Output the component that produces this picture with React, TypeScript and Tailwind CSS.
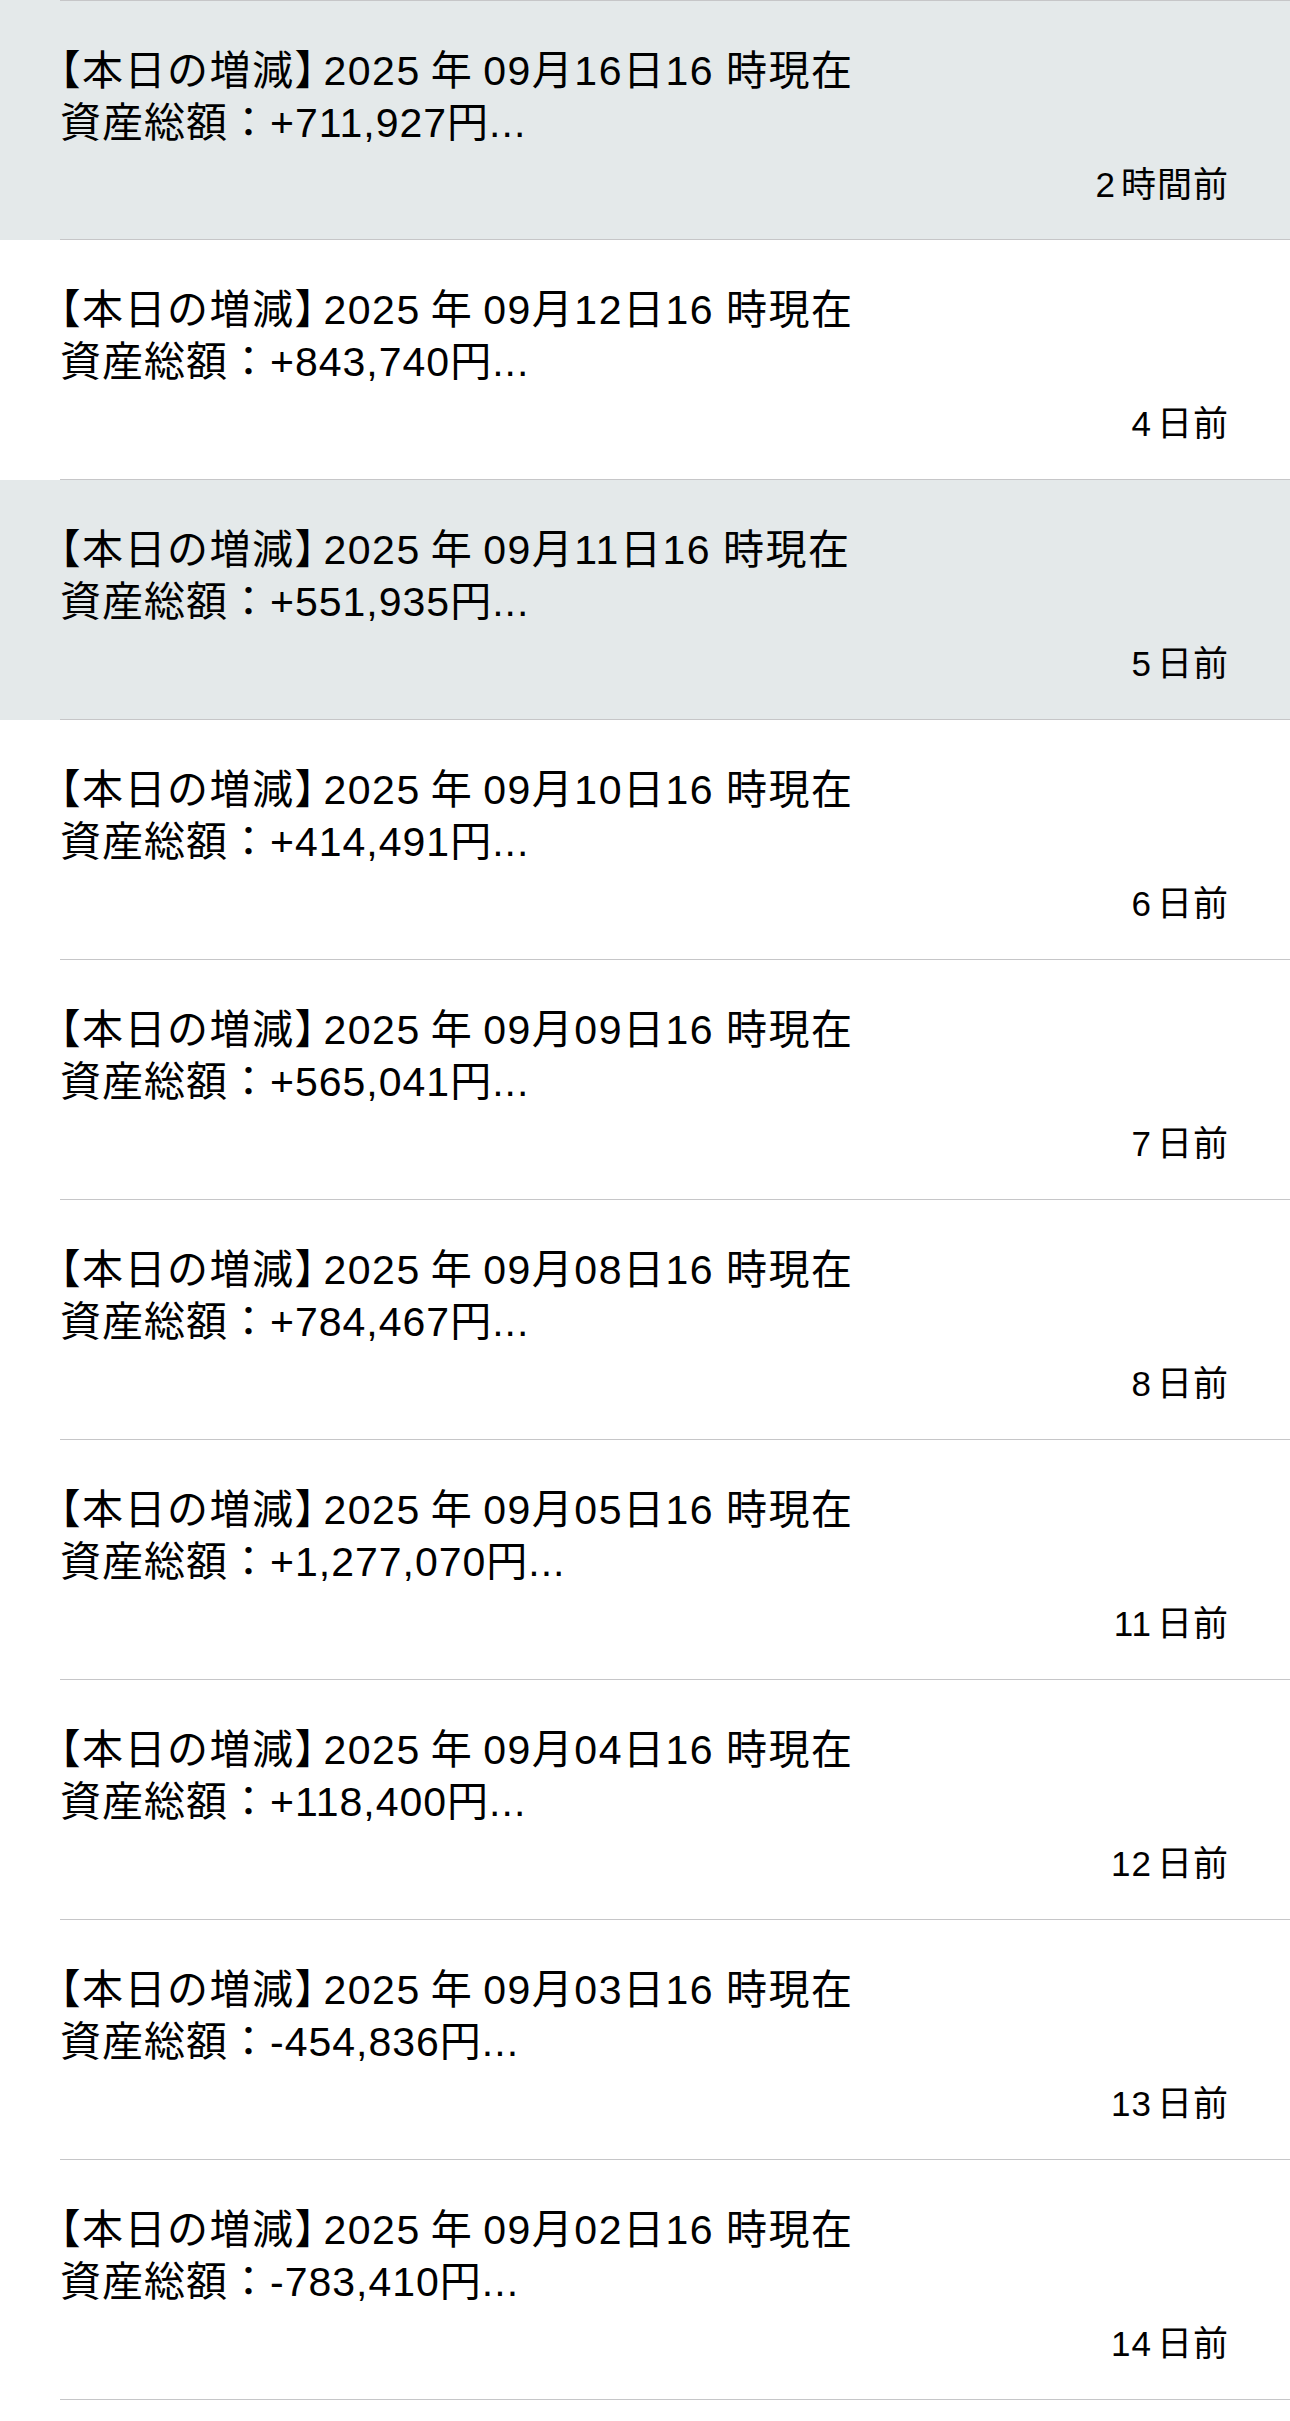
import React from "react";

type Row = { day: string; amount: string; num: string; unit: string };

const rows: Row[] = [
  { day: "16", amount: "+711,927", num: "2", unit: "時間前" },
  { day: "12", amount: "+843,740", num: "4", unit: "日前" },
  { day: "11", amount: "+551,935", num: "5", unit: "日前" },
  { day: "10", amount: "+414,491", num: "6", unit: "日前" },
  { day: "09", amount: "+565,041", num: "7", unit: "日前" },
  { day: "08", amount: "+784,467", num: "8", unit: "日前" },
  { day: "05", amount: "+1,277,070", num: "11", unit: "日前" },
  { day: "04", amount: "+118,400", num: "12", unit: "日前" },
  { day: "03", amount: "-454,836", num: "13", unit: "日前" },
  { day: "02", amount: "-783,410", num: "14", unit: "日前" },
];

function Item({ row, index }: { row: Row; index: number }) {
  const gray = index === 0 || index === 2;
  const first = index === 0;
  return (
    <div className={gray ? "flex flex-col bg-[#e4e9ea]" : "flex flex-col bg-white"}>
      {first && <div className="ml-[60px] h-px bg-[#c6c6c8]" />}
      <div
        className={
          first
            ? "flex h-[238px] flex-col pl-[60px] pr-[61px] pt-[44px]"
            : "flex h-[239px] flex-col pl-[60px] pr-[61px] pt-[44px]"
        }
      >
        <div className="whitespace-nowrap text-[41px] leading-[52px]">
          <div className="tracking-[1.5px]">
            <span className="[font-feature-settings:'halt']">【</span>
            本日の増減
            <span className="mr-[7px] [font-feature-settings:'halt']">】</span>
            <span className="mr-[10px]">2025</span>
            <span className="mr-[10px]">年</span>
            <span className="mr-[12px]">{`09月${row.day}日16`}</span>
            時現在
          </div>
          <div className="tracking-[1px]">{`資産総額：${row.amount}円...`}</div>
        </div>
        <div className="mt-[16px] text-right text-[35px] leading-[40px] tracking-[1px]">
          <span className="mr-[5px]">{row.num}</span>
          {row.unit}
        </div>
      </div>
      <div className="ml-[60px] h-px bg-[#c6c6c8]" />
    </div>
  );
}

export default function App() {
  return (
    <div className="min-h-[2421px] w-[1290px] bg-white text-black [font-family:'Liberation_Sans','Noto_Sans_CJK_JP',sans-serif]">
      {rows.map((r, i) => (
        <Item key={i} row={r} index={i} />
      ))}
    </div>
  );
}
